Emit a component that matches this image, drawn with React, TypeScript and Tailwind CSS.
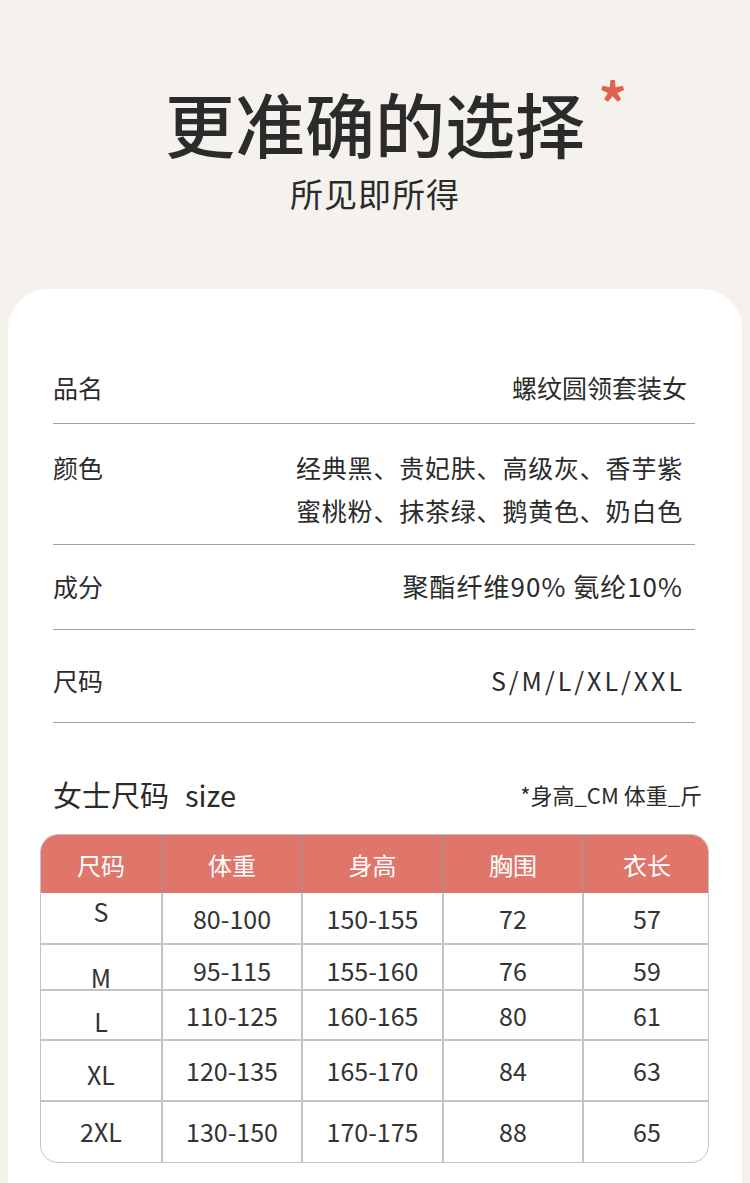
import React from 'react';

const font = { fontFamily: '"Noto Sans CJK SC", "Noto Sans", sans-serif' };

interface InfoRow {
  label: string;
  lines: string[];
  pad: string;
  text: string;
}

const infoRows: InfoRow[] = [
  { label: '品名', lines: ['螺纹圆领套装女'], pad: 'pt-[80px] pb-[18px]', text: 'text-[25px] leading-[36px] pr-[8px]' },
  {
    label: '颜色',
    lines: ['经典黑、贵妃肤、高级灰、香芋紫', '蜜桃粉、抹茶绿、鹅黄色、奶白色'],
    pad: 'pt-[22px] pb-[12px]',
    text: 'text-[25px] leading-[43px] tracking-[0.8px] pr-[12px]',
  },
  {
    label: '成分',
    lines: ['聚酯纤维90% 氨纶10%'],
    pad: 'pt-[23px] pb-[25px]',
    text: 'text-[26px] leading-[36px] tracking-[1px] pr-[12px]',
  },
  { label: '尺码', lines: ['S/M/L/XL/XXL'], pad: 'pt-[32px] pb-[24px]', text: 'text-[25px] leading-[36px] tracking-[3px] pr-[10px]' },
];

const headers = ['尺码', '体重', '身高', '胸围', '衣长'];

const sizes = [
  { size: 'S', sizePad: 'pb-[14px]', h: 'h-[52px]', vals: ['80-100', '150-155', '72', '57'] },
  { size: 'M', sizePad: 'pt-[14px]', h: 'h-[46px]', vals: ['95-115', '155-160', '76', '59'] },
  { size: 'L', sizePad: 'pt-[12px]', h: 'h-[50px]', vals: ['110-125', '160-165', '80', '61'] },
  { size: 'XL', sizePad: 'pt-[8px]', h: 'h-[61px]', vals: ['120-135', '165-170', '84', '63'] },
  { size: '2XL', sizePad: '', h: 'h-[60px]', vals: ['130-150', '170-175', '88', '65'] },
];

const App = () => {
  return (
    <div className="w-[750px] min-h-[1183px] bg-[#f5f2ed] text-[#2b2b2b]" style={font}>
      {/* heading */}
      <div className="h-[289px] flex flex-col items-center pt-[77px]">
        <div className="relative text-[70px] leading-[92px] font-medium">
          更准确的选择
          <span className="absolute -right-[42px] -top-[4px] text-[56px] leading-none text-[#e2604f] font-bold">*</span>
        </div>
        <div className="text-[33px] leading-[44px] mt-[2px] tracking-[1px]">所见即所得</div>
      </div>

      {/* card */}
      <div className="mx-2 bg-white rounded-t-[40px] pb-[22px]">
        <div className="px-[45px] pr-[47px]">
          {infoRows.map((row) => (
            <div key={row.label} className={`flex justify-between border-b border-[#a0a0a0] ${row.pad}`}>
              <div className={`text-[25px] ${row.lines.length > 1 ? 'leading-[43px]' : 'leading-[36px]'}`}>
                {row.label}
              </div>
              <div className={`text-right ${row.text}`}>
                {row.lines.map((l) => (
                  <div key={l}>{l}</div>
                ))}
              </div>
            </div>
          ))}
        </div>

        {/* size title */}
        <div className="flex justify-between items-center px-[45px] pr-[40px] mt-[51px] mb-[20px]">
          <div className="text-[29px] leading-[40px]">
            女士尺码<span className="ml-[16px]">size</span>
          </div>
          <div className="text-[22px] leading-[30px]">*身高_CM 体重_斤</div>
        </div>

        {/* table */}
        <div className="mx-[32px] w-[669px] rounded-[18px] border border-[#c4c4c4] overflow-hidden">
          <div className="grid grid-cols-[122px_140px_141px_140px_126px] h-[58px] bg-[#e07569] text-white">
            {headers.map((h, i) => (
              <div
                key={h}
                className={`flex items-center justify-center text-[24px] pt-[2px] ${i < 4 ? 'border-r-2 border-[#b98a84]' : ''}`}
              >
                {h}
              </div>
            ))}
          </div>
          {sizes.map((s, ri) => (
            <div
              key={s.size}
              className={`grid grid-cols-[122px_140px_141px_140px_126px] ${s.h} ${
                ri < sizes.length - 1 ? 'border-b-2 border-[#c4c4c4]' : ''
              } text-[25px] text-[#333]`}
            >
              <div className={`flex items-center justify-center border-r-2 border-[#c4c4c4] ${s.sizePad}`}>{s.size}</div>
              {s.vals.map((v, i) => (
                <div
                  key={i}
                  className={`flex items-center justify-center ${i < 3 ? 'border-r-2 border-[#c4c4c4]' : ''}`}
                >
                  {v}
                </div>
              ))}
            </div>
          ))}
        </div>
      </div>
    </div>
  );
};

export default App;
